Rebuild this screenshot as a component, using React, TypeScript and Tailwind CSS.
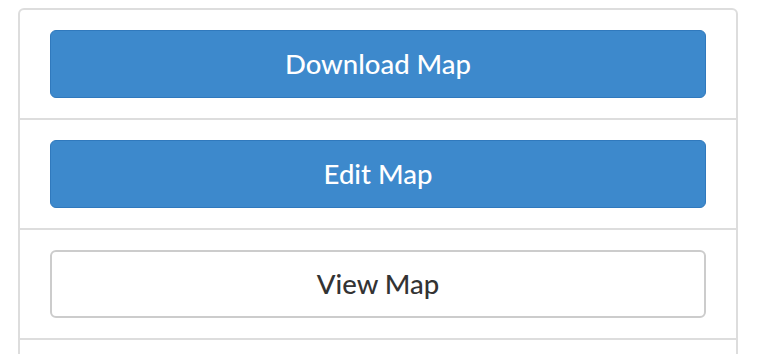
export default function App() {
  const rows = [
    { label: "Download Map", primary: true },
    { label: "Edit Map", primary: true },
    { label: "View Map", primary: false },
  ];

  return (
    <div className="min-h-screen bg-white pl-[18px] pt-[8px] font-['Lato','Liberation_Sans',sans-serif]">
      <div className="w-[720px] rounded-t-[6px] border-2 border-[#dddddd] bg-white">
        {rows.map((r, i) => (
          <div
            key={r.label}
            className={`px-[30px] py-[20px] ${i > 0 ? "border-t-2 border-[#dddddd]" : ""}`}
          >
            <button
              className={
                r.primary
                  ? "flex h-[68px] w-full items-center justify-center rounded-[6px] border border-[#3079bd] bg-[#3d89cc] text-[27.5px] font-medium text-white"
                  : "flex h-[68px] w-full items-center justify-center rounded-[6px] border-2 border-[#cccccc] bg-white text-[27.5px] font-medium text-[#333333]"
              }
            >
              {r.label}
            </button>
          </div>
        ))}
        <div className="h-[40px] border-t-2 border-[#dddddd]" />
      </div>
    </div>
  );
}
